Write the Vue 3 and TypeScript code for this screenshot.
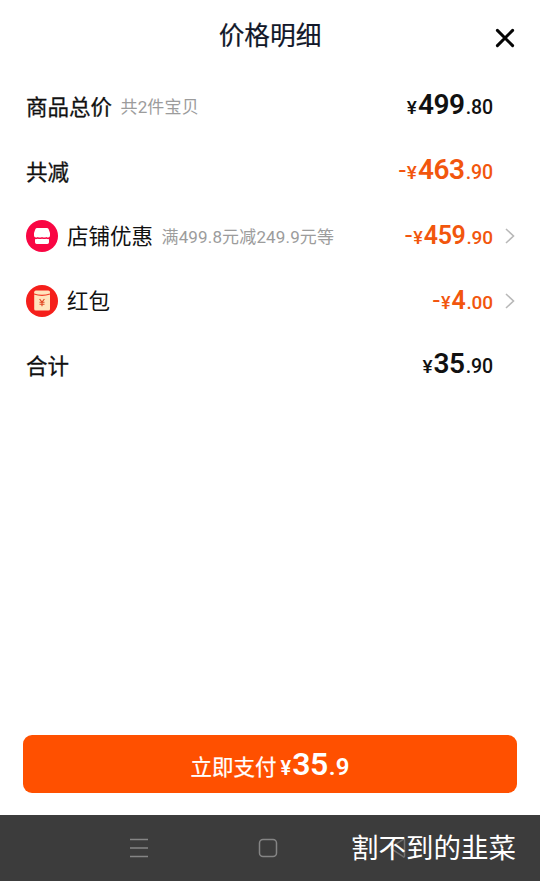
<script setup lang="ts">
interface PriceRow {
  label: string
  note?: string
  icon?: 'shop' | 'packet'
  minus?: boolean
  whole: string
  cents: string
  size: 'large' | 'medium'
}

const rows: PriceRow[] = [
  { label: '商品总价', note: '共2件宝贝', whole: '499', cents: '.80', size: 'large' },
  { label: '共减', minus: true, whole: '463', cents: '.90', size: 'large' },
  { label: '店铺优惠', note: '满499.8元减249.9元等', icon: 'shop', minus: true, whole: '459', cents: '.90', size: 'medium' },
  { label: '红包', icon: 'packet', minus: true, whole: '4', cents: '.00', size: 'medium' },
  { label: '合计', whole: '35', cents: '.90', size: 'large' },
]
</script>

<template>
  <div class="screen">
    <header class="header">
      <h1 class="title">价格明细</h1>
      <button class="close" aria-label="关闭">
        <svg width="20" height="20" viewBox="0 0 20 20">
          <path d="M2.400 2.400 17.600 17.600M17.600 2.400 2.400 17.600" fill="none" stroke="#050505" stroke-width="3" stroke-linecap="round" />
        </svg>
      </button>
    </header>

    <main class="rows">
      <div v-for="row in rows" :key="row.label" class="row">
        <svg v-if="row.icon === 'shop'" class="badge" viewBox="0 0 32 32">
          <circle cx="16" cy="16" r="16" fill="#f90643" />
          <path d="M11.200 8h9.600q1.400 0 2 1.400l1.200 3.500v2.600q0 2-1.700 2-1.300 0-2-.5-.8.6-2.100.6t-2.200-.6q-.8.6-2.100.6t-2.100-.6q-.7.500-2 .5Q8 17.500 8 15.500v-2.600L9.200 9.400Q9.800 8 11.200 8Z" fill="#fff" />
          <path d="M9 19.100q1.500.2 2.800-.4 2.100.8 4.200 0 2.100.8 4.200 0 1.300.6 2.800.4v3.200q0 1.700-1.700 1.700H10.700q-1.700 0-1.700-1.700Z" fill="#fff" />
        </svg>
        <svg v-else-if="row.icon === 'packet'" class="badge" viewBox="0 0 32 32">
          <circle cx="16" cy="16" r="16" fill="#f51f1b" />
          <rect x="8.200" y="5.600" width="15.800" height="20" rx="1.600" fill="#ffe4bd" />
          <path d="M8 9q8 2.800 16 0" fill="none" stroke="#f33c28" stroke-width="1.100" />
          <path d="m13.600 14 2.400 3.200 2.400-3.200M13.500 17.300h5M13.500 19.300h5M16 17v4.300" fill="none" stroke="#df4420" stroke-width="1.100" />
        </svg>
        <span class="label" :class="{ strong: !row.icon }">{{ row.label }}</span>
        <span v-if="row.note" class="note">{{ row.note }}</span>
        <span class="amount" :class="[row.size, { discount: row.minus }]">
          <span v-if="row.minus" class="minus">-</span><span class="yen">¥</span><span class="whole">{{ row.whole }}</span><span class="cents">{{ row.cents }}</span>
        </span>
        <span class="tail">
          <svg v-if="row.icon" width="10" height="16" viewBox="0 0 10 16">
            <path d="m1 1 7.500 7L1 15" fill="none" stroke="#b8b8b8" stroke-width="1.600" />
          </svg>
        </span>
      </div>
    </main>

    <button class="pay">
      <span class="pay-label">立即支付</span><span class="pay-yen">¥</span><span class="pay-whole">35</span><span class="pay-cents">.9</span>
    </button>

    <footer class="navbar">
      <svg class="nav-icon" viewBox="0 0 20 20"><path d="M1 1.500h18M1 10h18M1 18.500h18" /></svg>
      <svg class="nav-icon" viewBox="0 0 20 20"><rect x="1.500" y="1.500" width="17" height="17" rx="3.500" /></svg>
      <svg class="nav-icon dim" viewBox="0 0 20 20"><path d="M17.500 2v16q0 1.300-1.300.7L4.500 11q-1.300-1 0-2l11.700-7.700q1.300-.6 1.300.7Z" /></svg>
      <span class="watermark">割不到的韭菜</span>
    </footer>
  </div>
</template>

<style>
body {
  margin: 0;
  background: #fff;
}
</style>

<style scoped>
.screen {
  box-sizing: border-box;
  display: flex;
  flex-direction: column;
  width: 540px;
  height: 881px;
  overflow: hidden;
  background: #fff;
  color: #111;
  font-family: Roboto, "Noto Sans CJK SC", sans-serif;
}
button {
  border: 0;
  padding: 0;
  font-family: inherit;
}
.header {
  display: grid;
  grid-template-columns: 44px 1fr 44px;
  height: 74.500px;
  flex: none;
}
.title {
  grid-column: 2;
  margin: 0;
  padding-top: 17px;
  font-size: 25.700px;
  line-height: 38px;
  font-weight: 400;
  color: #111729;
  text-align: center;
  -webkit-text-stroke: 0.200px #111729;
}
.close {
  width: 20px;
  height: 20px;
  margin: 28px 0 0 -1px;
  background: none;
}
.close svg {
  display: block;
}
.rows {
  flex: 1;
  padding: 0 25px 0 26px;
}
.row {
  display: flex;
  align-items: center;
  height: 64.750px;
}
.badge {
  width: 32px;
  height: 32px;
  margin: 0 9px 0 0;
  flex: none;
}
.label {
  padding-top: 2px;
  font-size: 21.500px;
  line-height: 32px;
}
.label.strong {
  -webkit-text-stroke: 0.300px #111;
}
.note {
  margin-left: 8.500px;
  padding-top: 1px;
  font-size: 17px;
  line-height: 26px;
  letter-spacing: 0.150px;
  color: #9c9c9c;
}
.amount {
  display: flex;
  align-items: baseline;
  margin-left: auto;
  font-weight: 600;
  line-height: 32px;
}
.discount {
  color: #f2560d;
}
.minus {
  margin-right: 1px;
  font-size: 26px;
  font-weight: 400;
}
.yen {
  font-size: 19px;
  font-weight: 500;
}
.whole {
  margin-left: 1px;
  font-size: 28px;
  letter-spacing: -0.400px;
}
.medium .whole {
  font-size: 25px;
}
.medium .yen {
  font-size: 18px;
}
.cents {
  margin-left: 1px;
  font-size: 19.500px;
  font-weight: 500;
  letter-spacing: -0.100px;
}
.medium .cents {
  font-size: 19px;
}
.tail {
  display: flex;
  justify-content: flex-end;
  width: 22px;
}
.pay {
  display: flex;
  justify-content: center;
  align-items: baseline;
  flex: none;
  height: 57.500px;
  margin: 0 23px 22.500px;
  border-radius: 9px;
  background: #ff5000;
  color: #fff;
  line-height: 59px;
}
.pay-label {
  font-size: 21.500px;
  -webkit-text-stroke: 0.250px #fff;
}
.pay-yen {
  margin-left: 4px;
  font-size: 20px;
  font-weight: 600;
}
.pay-whole {
  margin-left: 1px;
  font-size: 32px;
  font-weight: 600;
  letter-spacing: -0.500px;
}
.pay-cents {
  margin-left: 1px;
  font-size: 24px;
  font-weight: 600;
}
.navbar {
  position: relative;
  display: flex;
  align-items: center;
  gap: 109px;
  flex: none;
  height: 66px;
  padding-left: 129px;
  background: #3c3c3c;
}
.nav-icon {
  width: 20px;
  height: 20px;
  fill: none;
  stroke: #858585;
  stroke-width: 1.500;
}
.nav-icon.dim {
  stroke: #707070;
}
.watermark {
  position: absolute;
  right: 24px;
  top: 14px;
  font-size: 27.500px;
  line-height: 40px;
  color: #fff;
}
</style>
